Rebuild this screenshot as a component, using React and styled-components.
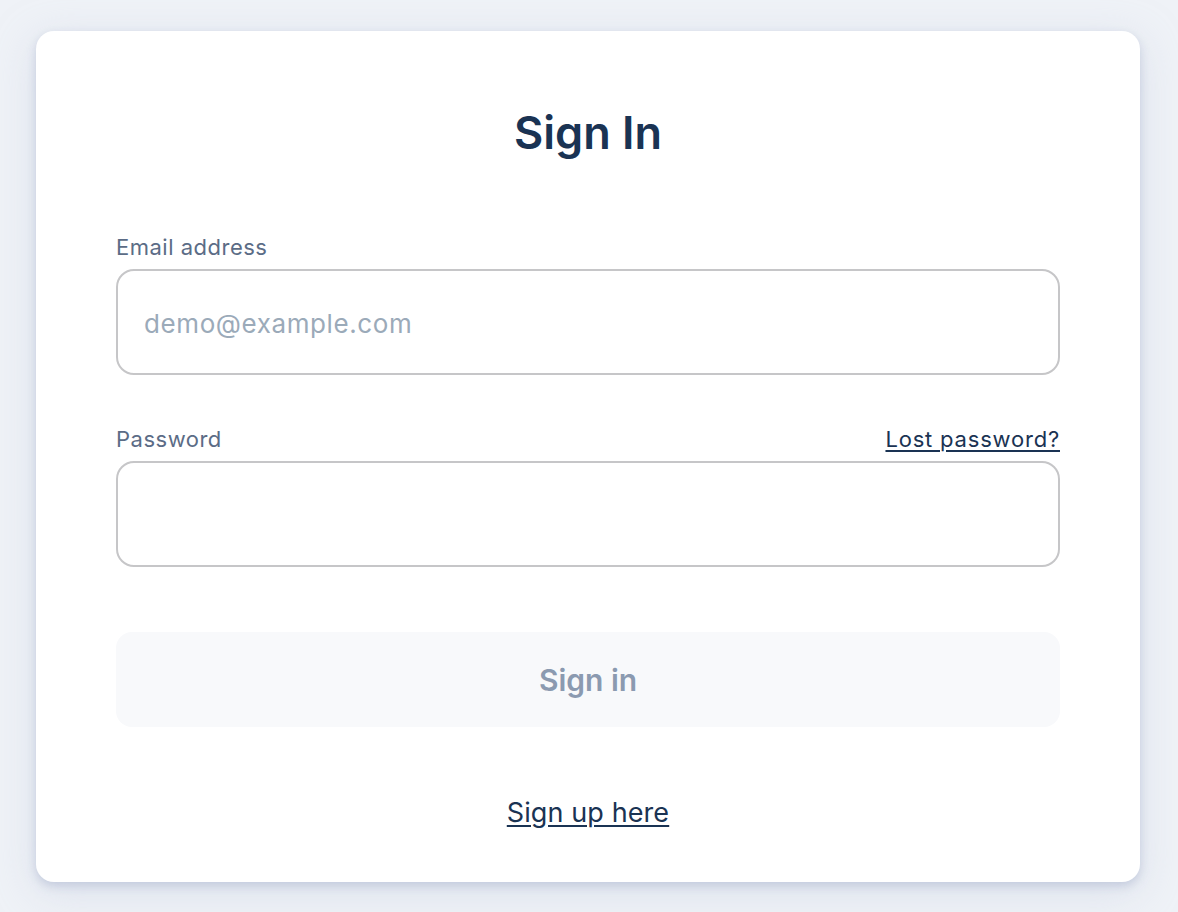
import styled, { createGlobalStyle } from "styled-components";

const GlobalStyle = createGlobalStyle`
  html, body {
    margin: 0;
    padding: 0;
    background: #eff2f7;
    font-family: Inter, "Noto Sans", sans-serif;
  }
`;

const Page = styled.div`
  min-height: 912px;
  padding: 31px 38px 30px 36px;
  box-sizing: border-box;
`;

const Card = styled.div`
  background: #ffffff;
  border-radius: 18px;
  box-shadow: 0 4px 10px rgba(160, 170, 200, 0.45), 0 10px 40px rgba(200, 208, 225, 0.5);
  padding: 72px 80px 55px;
  display: flex;
  flex-direction: column;
`;

const Title = styled.h1`
  margin: 0 0 70px;
  text-align: center;
  font-size: 45px;
  line-height: 60px;
  font-weight: 600;
  color: #1a3353;
`;

const Field = styled.div`
  display: flex;
  flex-direction: column;
  margin-bottom: ${(p) => p.gap || 0}px;
`;

const LabelRow = styled.div`
  display: flex;
  justify-content: space-between;
  align-items: center;
  margin-bottom: 8px;
`;

const Label = styled.label`
  font-size: 22px;
  line-height: 28px;
  letter-spacing: 0.5px;
  color: #5b6c86;
`;

const TextLink = styled.a`
  font-size: ${(p) => p.size || 22}px;
  line-height: 28px;
  letter-spacing: ${(p) => p.spacing ?? 0.8}px;
  color: #1a3353;
  text-decoration: underline;
  text-underline-offset: 3px;
  cursor: pointer;
`;

const Input = styled.input`
  height: 106px;
  box-sizing: border-box;
  border: 2px solid #c6c6c8;
  border-radius: 18px;
  padding: 2px 26px 0;
  font-family: inherit;
  font-size: 26px;
  letter-spacing: 0.6px;
  color: #1a3353;
  outline: none;
  &::placeholder {
    color: #9baab9;
  }
`;

const Button = styled.button`
  height: 95px;
  border: none;
  border-radius: 16px;
  background: #f8f9fb;
  color: #8b9ab0;
  font-family: inherit;
  font-size: 30px;
  font-weight: 600;
  margin-top: 65px;
  cursor: pointer;
`;

const Footer = styled.div`
  margin-top: 72px;
  text-align: center;
`;

export default function App() {
  return (
    <>
      <GlobalStyle />
      <Page>
        <Card>
          <Title>Sign In</Title>
          <Field gap={50}>
            <LabelRow>
              <Label>Email address</Label>
            </LabelRow>
            <Input type="email" placeholder="demo@example.com" />
          </Field>
          <Field>
            <LabelRow>
              <Label>Password</Label>
              <TextLink>Lost password?</TextLink>
            </LabelRow>
            <Input type="password" />
          </Field>
          <Button>Sign in</Button>
          <Footer>
            <TextLink size={27} spacing={0.1}>Sign up here</TextLink>
          </Footer>
        </Card>
      </Page>
    </>
  );
}
